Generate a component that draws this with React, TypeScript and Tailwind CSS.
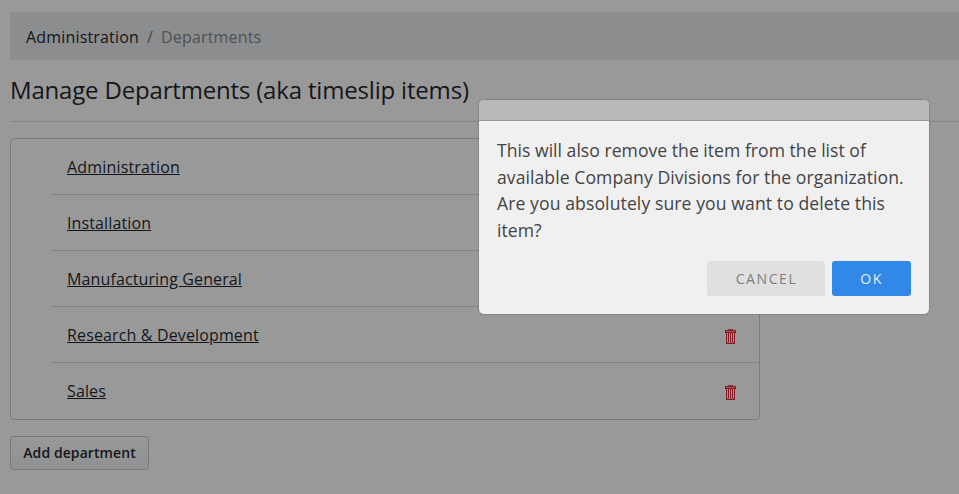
const items = [
  { name: "Administration", spacing: "tracking-[0.17px]" },
  { name: "Installation", spacing: "tracking-[0.12px]" },
  { name: "Manufacturing General", spacing: "tracking-[0.12px]" },
  { name: "Research & Development", spacing: "tracking-[0.14px]" },
  { name: "Sales", spacing: "tracking-[0.14px]" },
];

function Trash() {
  return (
    <svg className="mt-[3px] mr-px" width="11" height="15" viewBox="0 0 11 15" fill="none" shapeRendering="crispEdges">
      <path d="M3 0h5v1H3z" fill="#8a3a42" />
      <path d="M0 1h11v1H0zM0 2h1v1H0zM10 2h1v1h-1zM0 3h11v1H0z" fill="#861a24" />
      <path d="M1 2h9v1H1z" fill="#92646a" />
      <path d="M1 4h1v10H1zM3 4h1v9H3zM5 4h1v9H5zM7 4h1v9H7zM9 4h1v10H9zM1 14h9v1H1z" fill="#861a24" />
      <path d="M2 13h7v1H2z" fill="#92646a" />
    </svg>
  );
}

export default function App() {
  return (
    <div className="relative h-[494px] w-[959px] overflow-hidden bg-[#999999] font-['Open_Sans',sans-serif] text-base text-[#141619]">
      <div className="pt-3 pl-[10px]">
        <nav className="flex h-12 items-center rounded-l bg-[#8c8d8f] px-4 pt-px tracking-[0.17px]">
          <span>Administration</span>
          <span className="px-2 text-[#414549]">/</span>
          <span className="text-[#4d5155]">Departments</span>
        </nav>
        <h1 className="mt-[15px] h-[47px] border-b border-[#868686] text-2xl leading-[29px] tracking-[-0.18px]">Manage Departments (aka timeslip items)</h1>
        <ul className="mt-4 w-[750px] rounded border border-[#7c7c7e] pl-10">
          {items.map((item) => (
            <li key={item.name} className="flex h-14 items-center justify-between border-b border-[#838385] pr-[22px] pl-4 last:border-b-0">
              <span className={`underline ${item.spacing}`}>{item.name}</span>
              <Trash />
            </li>
          ))}
        </ul>
        <button className="mt-4 block h-[34px] w-[139px] rounded-[3px] border border-[#77797b] bg-linear-to-b from-[#979899] to-[#8f9193] text-sm font-semibold tracking-[0.08px]">Add department</button>
      </div>
      <div className="absolute top-[100px] left-[479px] h-[214px] w-[450px] overflow-hidden rounded-[5px] bg-[#f0f0f0] text-[#444444] shadow-[0_0_1px_1px_rgba(0,0,0,0.12)]">
        <div className="h-[21px] border-b border-[#999] bg-[#bababa]" />
        <p className="px-[18px] pt-4 text-[17.6px] leading-[26.6px] tracking-[0.06px]">
          <span className="tracking-[0.02px]">This will also remove the item from the list of</span><br />available Company Divisions for the organization.<br /><span className="tracking-[0.09px]">Are you absolutely sure you want to delete this</span><br />item?
        </p>
        <div className="mt-[18px] flex justify-end gap-[7px] pr-[18px] text-sm tracking-[1.6px]">
          <button className="h-[35px] w-[118px] rounded-[3px] bg-[#e0e0e0] pl-px text-[#7d7d7d]">CANCEL</button>
          <button className="h-[35px] w-[79px] rounded-[3px] bg-[#3288e6] text-[#e6f0fc]">OK</button>
        </div>
      </div>
    </div>
  );
}
